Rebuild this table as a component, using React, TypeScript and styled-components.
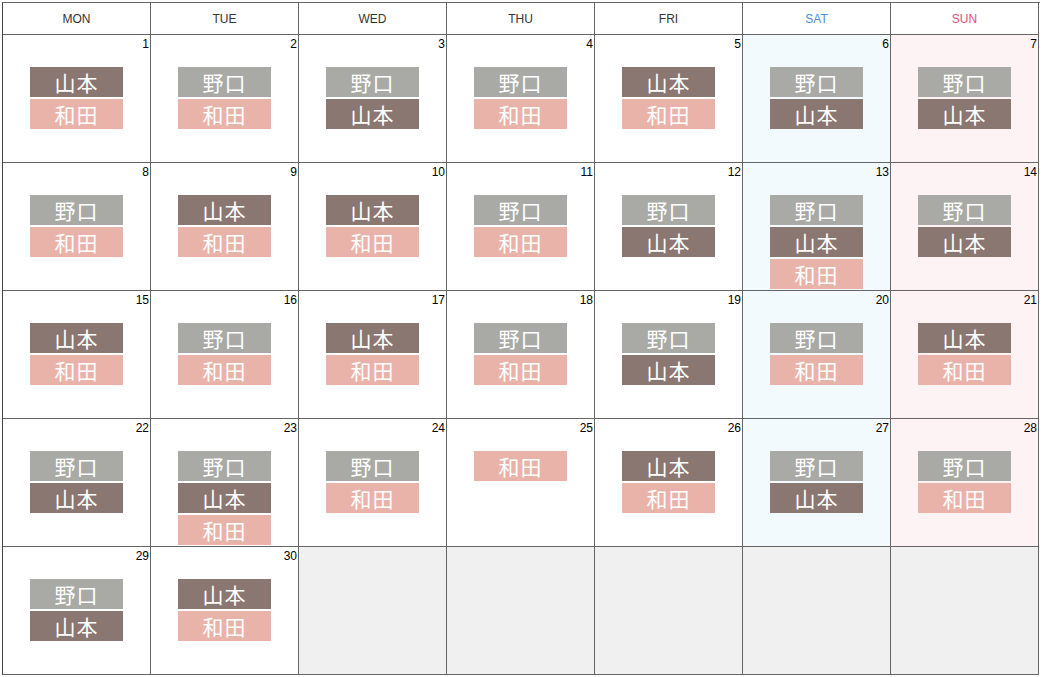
import styled, { createGlobalStyle } from "styled-components";

const GlobalStyle = createGlobalStyle`
  body {
    margin: 0;
    background: #fff;
    font-family: "Liberation Sans", Arial, sans-serif;
  }
`;

type Name = "山本" | "野口" | "和田";
type Tone = "weekday" | "sat" | "sun" | "empty";

const badgeColors: Record<Name, string> = {
  山本: "#8b7771",
  野口: "#a9a9a5",
  和田: "#e9b3aa",
};

const cellBg: Record<Tone, string> = {
  weekday: "#fff",
  sat: "#f2fafd",
  sun: "#fef3f4",
  empty: "#f0f0f0",
};

const Calendar = styled.div`
  margin: 2px 0 0 2px;
  width: 1037px;
  display: grid;
  grid-template-columns: repeat(7, 148px);
  border-left: 1px solid #444;
  border-top: 1px solid #666;
`;

const HeadCell = styled.div<{ $color: string }>`
  height: 31px;
  display: flex;
  align-items: center;
  justify-content: center;
  font-size: 12px;
  color: ${(p) => p.$color};
  border-right: 1px solid #666;
  border-bottom: 1px solid #666;
`;

const DayCell = styled.div<{ $tone: Tone }>`
  height: 127px;
  display: flex;
  flex-direction: column;
  background: ${(p) => cellBg[p.$tone]};
  border-right: 1px solid #666;
  border-bottom: 1px solid #666;
`;

const DayNum = styled.div`
  text-align: right;
  font-size: 12px;
  line-height: 14px;
  color: #000;
  padding: 2px 1px 0 0;
  height: 14px;
`;

const BadgeList = styled.div`
  margin-top: 16px;
  display: flex;
  flex-direction: column;
  align-items: center;
  gap: 2px;
`;

const Badge = styled.div<{ $name: Name }>`
  width: 93px;
  height: 30px;
  background: ${(p) => badgeColors[p.$name]};
  color: #fff;
  font-family: "Noto Sans CJK JP", sans-serif;
  font-size: 21px;
  line-height: 30px;
  text-align: center;
  letter-spacing: 1px;
`;

const heads = [
  { label: "MON", color: "#333" },
  { label: "TUE", color: "#333" },
  { label: "WED", color: "#333" },
  { label: "THU", color: "#333" },
  { label: "FRI", color: "#333" },
  { label: "SAT", color: "#4a8fdc" },
  { label: "SUN", color: "#e5507b" },
];

const shifts: Name[][] = [
  ["山本", "和田"], ["野口", "和田"], ["野口", "山本"], ["野口", "和田"], ["山本", "和田"], ["野口", "山本"], ["野口", "山本"],
  ["野口", "和田"], ["山本", "和田"], ["山本", "和田"], ["野口", "和田"], ["野口", "山本"], ["野口", "山本", "和田"], ["野口", "山本"],
  ["山本", "和田"], ["野口", "和田"], ["山本", "和田"], ["野口", "和田"], ["野口", "山本"], ["野口", "和田"], ["山本", "和田"],
  ["野口", "山本"], ["野口", "山本", "和田"], ["野口", "和田"], ["和田"], ["山本", "和田"], ["野口", "山本"], ["野口", "和田"],
  ["野口", "山本"], ["山本", "和田"],
];

export default function App() {
  const cells = Array.from({ length: 35 }, (_, i) => i);
  return (
    <>
      <GlobalStyle />
      <Calendar>
        {heads.map((h) => (
          <HeadCell key={h.label} $color={h.color}>
            {h.label}
          </HeadCell>
        ))}
        {cells.map((i) => {
          const names = shifts[i];
          const col = i % 7;
          const tone: Tone = !names ? "empty" : col === 5 ? "sat" : col === 6 ? "sun" : "weekday";
          return (
            <DayCell key={i} $tone={tone}>
              {names && (
                <>
                  <DayNum>{i + 1}</DayNum>
                  <BadgeList>
                    {names.map((n) => (
                      <Badge key={n} $name={n}>
                        {n}
                      </Badge>
                    ))}
                  </BadgeList>
                </>
              )}
            </DayCell>
          );
        })}
      </Calendar>
    </>
  );
}
